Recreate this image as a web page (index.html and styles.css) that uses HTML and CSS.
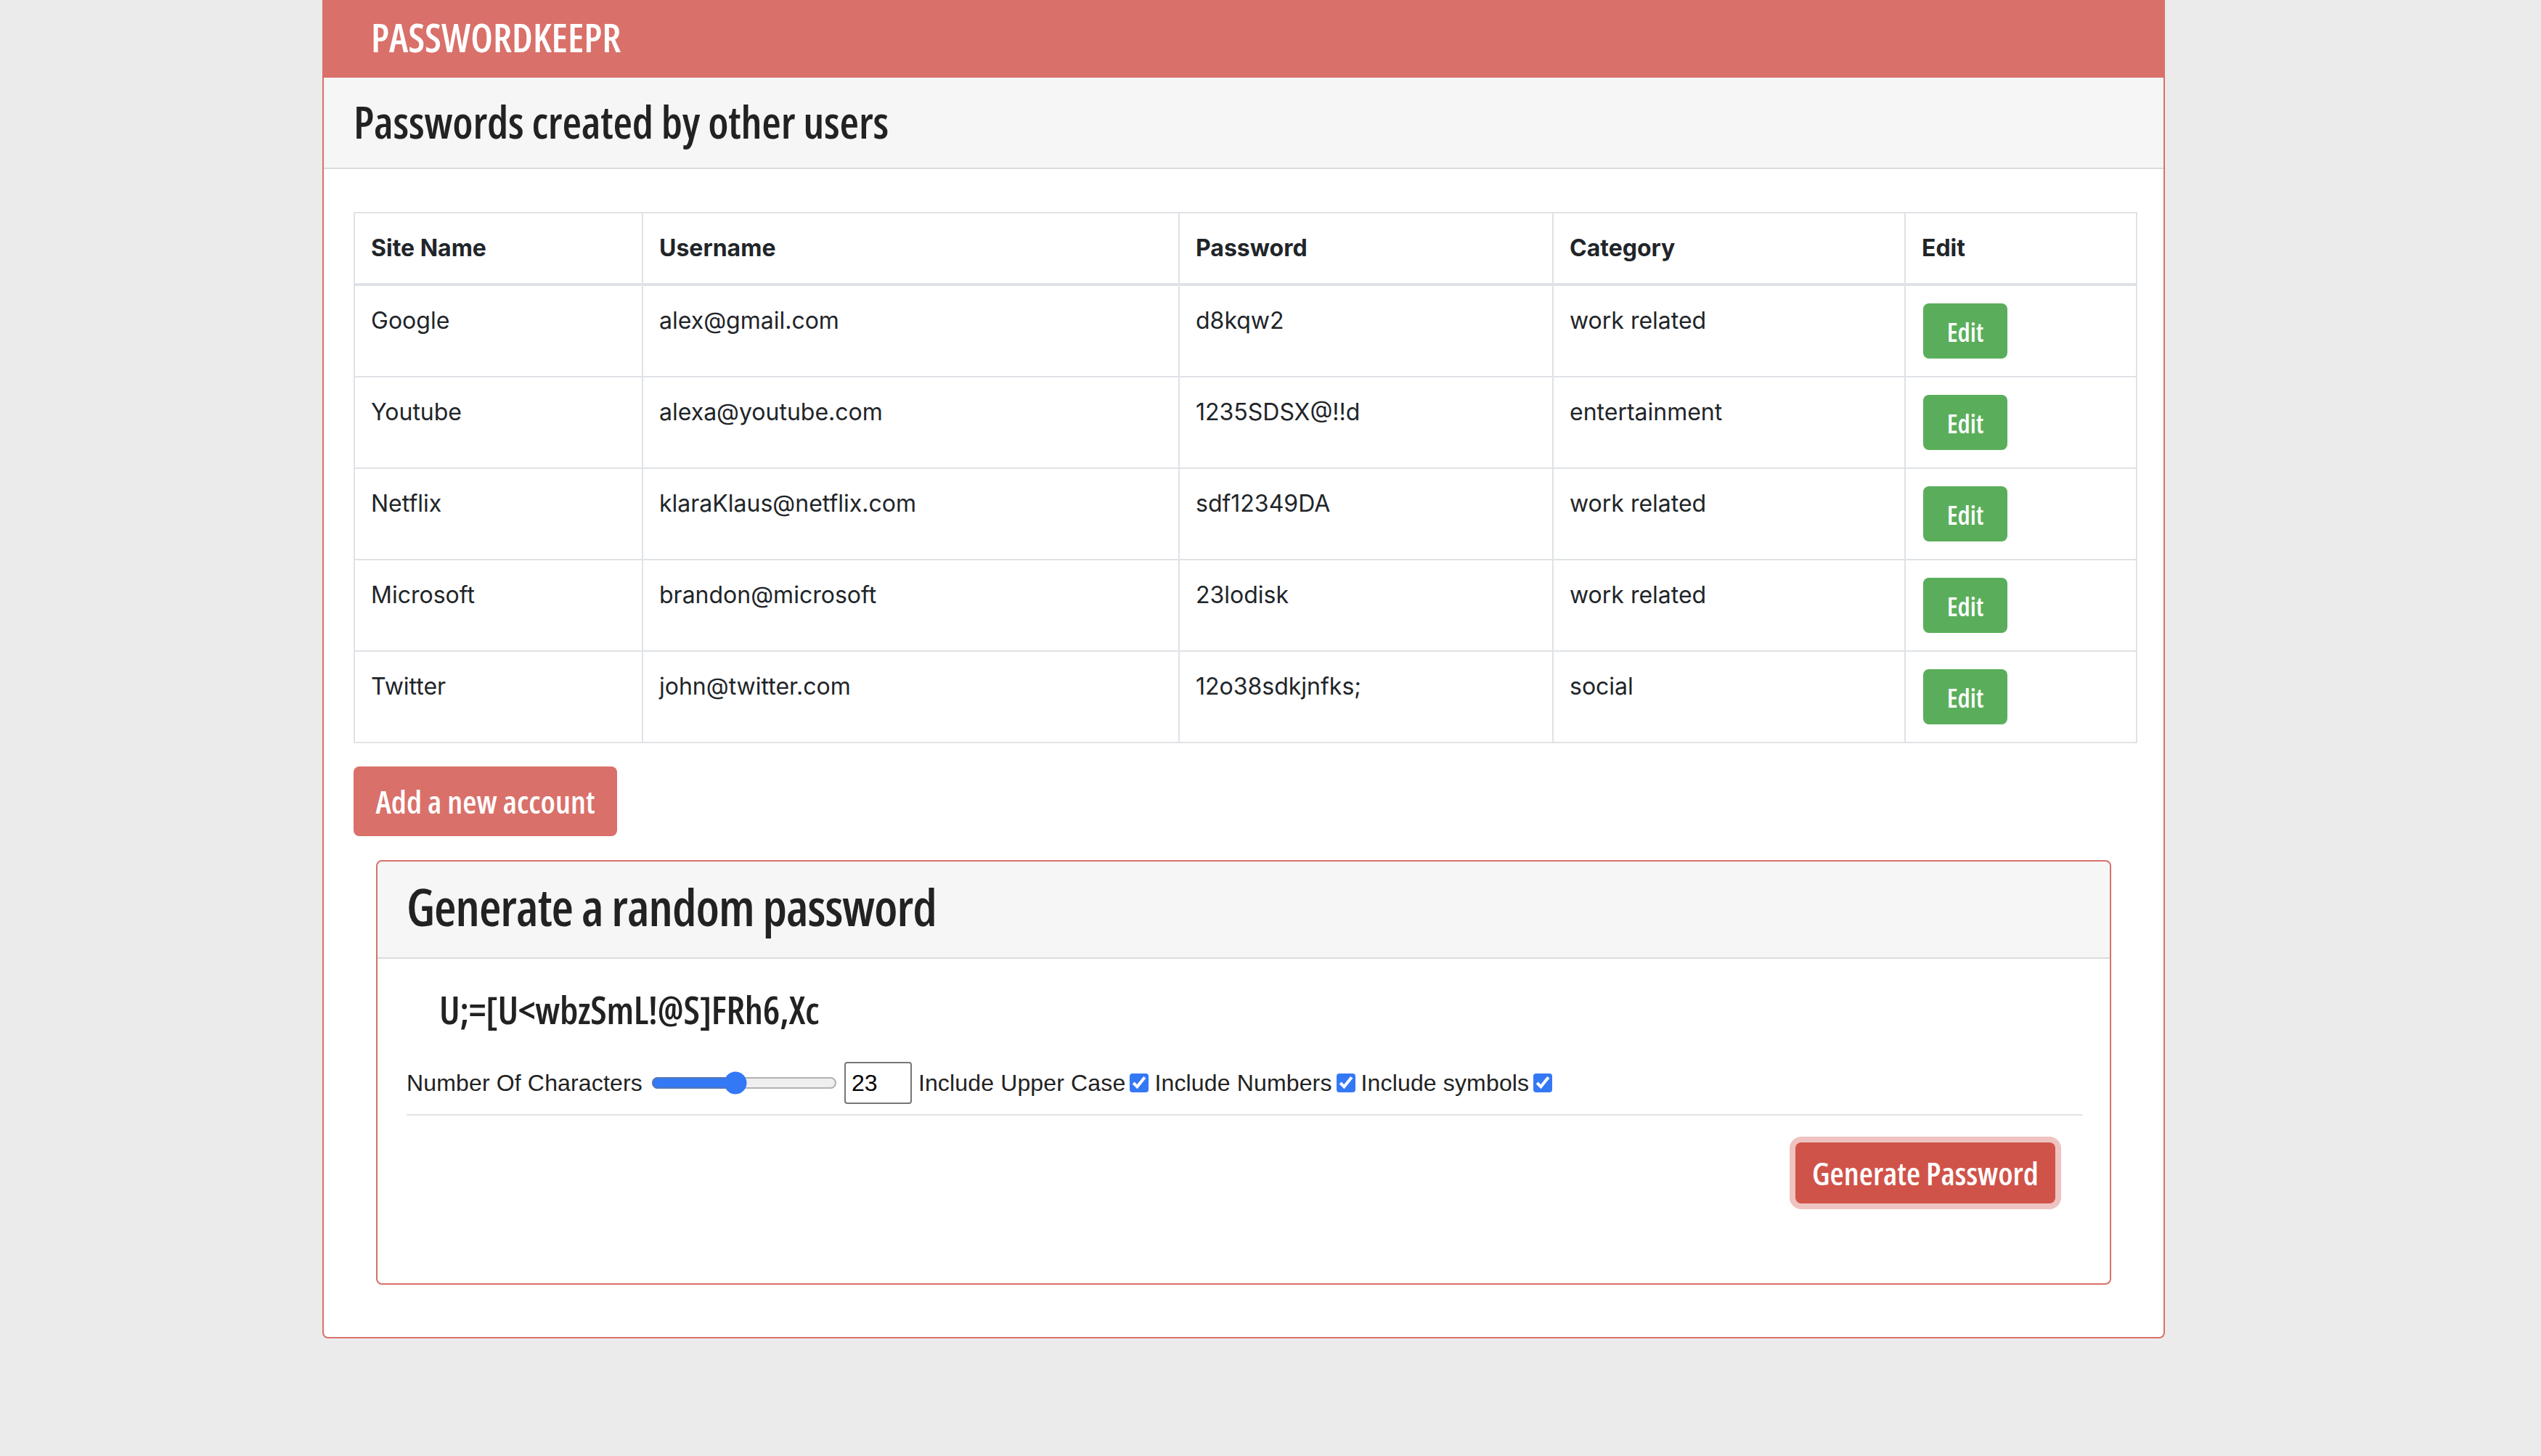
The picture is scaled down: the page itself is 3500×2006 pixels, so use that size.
FILE: index.html
```html
<!DOCTYPE html>
<html lang="en">
<head>
<meta charset="utf-8">
<title>PasswordKeepr</title>
<link rel="stylesheet" href="styles.css">
</head>
<body>
<div class="container">
  <nav class="navbar"><span class="brand">PASSWORDKEEPR</span></nav>
  <section class="card">
    <header class="card-header"><h3 class="title">Passwords created by other users</h3></header>
    <div class="card-body">
      <table class="table">
        <colgroup>
          <col class="c1"><col class="c2"><col class="c3"><col class="c4"><col class="c5">
        </colgroup>
        <thead>
          <tr><th>Site Name</th><th>Username</th><th>Password</th><th>Category</th><th>Edit</th></tr>
        </thead>
        <tbody>
          <tr><td>Google</td><td>alex@gmail.com</td><td>d8kqw2</td><td>work related</td><td><button class="btn btn-edit">Edit</button></td></tr>
          <tr><td>Youtube</td><td>alexa@youtube.com</td><td>1235SDSX@!!d</td><td>entertainment</td><td><button class="btn btn-edit">Edit</button></td></tr>
          <tr><td>Netflix</td><td>klaraKlaus@netflix.com</td><td>sdf12349DA</td><td>work related</td><td><button class="btn btn-edit">Edit</button></td></tr>
          <tr><td>Microsoft</td><td>brandon@microsoft</td><td>23lodisk</td><td>work related</td><td><button class="btn btn-edit">Edit</button></td></tr>
          <tr><td>Twitter</td><td>john@twitter.com</td><td>12o38sdkjnfks;</td><td>social</td><td><button class="btn btn-edit">Edit</button></td></tr>
        </tbody>
      </table>
      <button class="btn btn-add">Add a new account</button>

      <section class="card gen-card">
        <header class="card-header gen-header"><h2 class="gen-title">Generate a random password</h2></header>
        <div class="gen-body">
          <h3 class="gen-password">U;=[U&lt;wbzSmL!@S]FRh6,Xc</h3>
          <form class="controls">
            <label class="ctl-label">Number Of Characters</label>
            <input class="range" type="range" min="1" max="50" value="23">
            <input class="num" type="text" value="23">
            <label class="ctl-label">Include Upper Case</label>
            <input class="check" type="checkbox" checked>
            <label class="ctl-label">Include Numbers</label>
            <input class="check" type="checkbox" checked>
            <label class="ctl-label">Include symbols</label>
            <input class="check" type="checkbox" checked>
          </form>
          <hr class="rule">
          <div class="gen-actions">
            <button class="btn btn-generate">Generate Password</button>
          </div>
        </div>
      </section>
    </div>
  </section>
</div>
</body>
</html>
```

FILE: styles.css
```css
html, body {
  margin: 0;
  padding: 0;
}
body {
  background: #ebebeb;
  font-family: Inter, "Noto Sans", sans-serif;
  font-size: 32px;
  color: #212529;
  line-height: 48px;
}
.container {
  margin-left: 444px;
  width: 2538px;
}
.navbar {
  height: 107px;
  box-sizing: border-box;
  background: #d9706a;
  display: flex;
  align-items: center;
  padding-left: 67px;
  padding-bottom: 6px;
}
.brand {
  font-family: "Open Sans", sans-serif;
  font-stretch: 75%;
  font-weight: 600;
  font-size: 54px;
  color: #fff;
  line-height: 1;
}
.card {
  background: #fff;
  border: 2px solid #d9706a;
  border-top: none;
  border-radius: 0 0 8px 8px;
}
.card-header {
  background: #f6f6f6;
  height: 126px;
  box-sizing: border-box;
  border-bottom: 2px solid #dcdcdc;
  display: flex;
  align-items: center;
  padding-left: 41px;
  padding-bottom: 4px;
}
.title {
  margin: 0;
  font-family: "Open Sans", sans-serif;
  font-stretch: 75%;
  font-weight: 600;
  font-size: 61px;
  letter-spacing: -0.2px;
  line-height: 1;
  color: #222;
}
.card-body {
  padding: 59px 40px 72px 41px;
}
.table {
  width: 2455px;
  border-collapse: collapse;
  table-layout: fixed;
  border: 2px solid #dfe2e6;
  margin-bottom: 32px;
}
.c1 { width: 397px; }
.c2 { width: 739px; }
.c3 { width: 515px; }
.c4 { width: 485px; }
.c5 { width: 319px; }
.table th, .table td {
  border: 2px solid #dfe2e6;
  padding: 24px 22px;
  text-align: left;
  vertical-align: top;
}
.table th {
  font-weight: 700;
  border-bottom: 4px solid #dfe2e6;
  height: 48px;
}
.table td {
  height: 76px;
}
.btn {
  border: none;
  color: #fff;
  font-family: "Open Sans", sans-serif;
  font-stretch: 75%;
  font-weight: 600;
  cursor: pointer;
  border-radius: 8px;
  padding: 0;
}
.btn-edit {
  width: 116px;
  height: 76px;
  background: #5aae5b;
  font-size: 36px;
  margin-left: 2px;
  padding-top: 2px;
}
.btn-add {
  display: block;
  width: 363px;
  height: 96px;
  background: #d9706a;
  font-size: 44px;
}
.gen-card {
  margin: 33px 32px 0 31px;
  border-top: 2px solid #d9706a;
  border-radius: 8px;
}
.gen-header {
  height: 134px;
  border-radius: 8px 8px 0 0;
  padding-left: 40px;
  padding-bottom: 8px;
}
.gen-title {
  margin: 0;
  font-family: "Open Sans", sans-serif;
  font-stretch: 75%;
  font-weight: 600;
  font-size: 70px;
  letter-spacing: -1px;
  line-height: 1;
  color: #222;
}
.gen-body {
  padding: 30px 38px 110px 40px;
}
.gen-password {
  margin: 0 0 0 45px;
  font-family: "Open Sans", sans-serif;
  font-stretch: 75%;
  font-weight: 600;
  font-size: 53px;
  letter-spacing: -0.3px;
  line-height: 80px;
  color: #222;
}
.controls {
  display: flex;
  align-items: center;
  margin-top: 31px;
  height: 60px;
}
.ctl-label {
  font-family: "Liberation Sans", Arial, sans-serif;
  font-size: 32px;
  letter-spacing: 0.15px;
  color: #222;
}
.range {
  width: 128px;
  zoom: 2;
  margin: 0 4px 0 6px;
  accent-color: #3478f6;
}
.num {
  width: 93px;
  height: 58px;
  box-sizing: border-box;
  border: 2px solid #767676;
  border-radius: 4px;
  font-family: "Liberation Sans", Arial, sans-serif;
  font-size: 32px;
  padding: 0 8px;
  margin: 0 9px 0 2px;
  color: #000;
}
.check {
  zoom: 2;
  margin: 0 4px 0 3px;
  accent-color: #3478f6;
}
.rule {
  border: none;
  border-top: 2px solid #dfe2e6;
  margin: 13px 0 0 0;
}
.gen-actions {
  display: flex;
  justify-content: flex-end;
  padding-top: 37px;
  padding-right: 37px;
}
.btn-generate {
  width: 358px;
  height: 84px;
  background: #d0534a;
  font-size: 44px;
  box-shadow: 0 0 0 8px #efc3c0;
}
```
